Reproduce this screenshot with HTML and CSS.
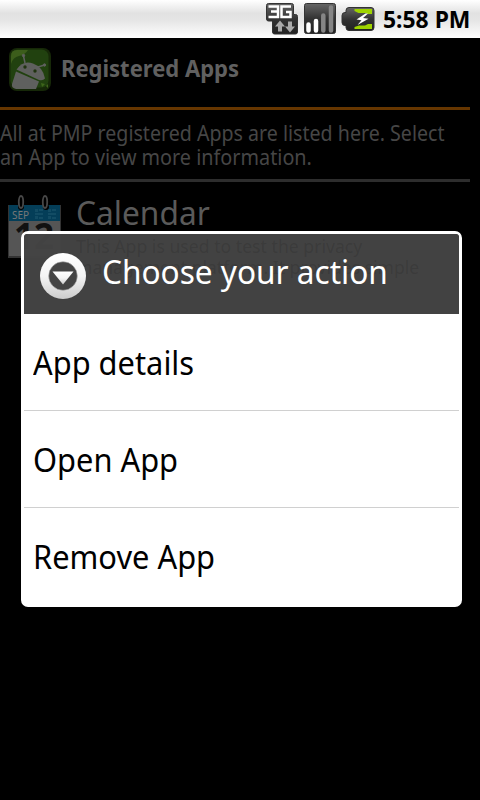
FILE: index.html
```html
<!DOCTYPE html>
<html lang="en">
<head>
<meta charset="utf-8">
<title>Registered Apps</title>
<link rel="stylesheet" href="styles.css">
</head>
<body>
<header class="status">
  <svg class="status-icons" width="112" height="38" viewBox="0 0 112 38">
    <defs>
      <linearGradient id="dark" x2="0" y2="1"><stop stop-color="#666"/><stop offset=".5" stop-color="#333"/><stop offset="1" stop-color="#222"/></linearGradient>
    </defs>
    <path d="M2.500 3.500h23q2 0 2 2v9h2q2 0 2 2v15.500q0 2-2 2H8.500q-2 0-2-2V21H2.500q-2 0-2-2V5.500q0-2 2-2Z" fill="url(#dark)" stroke="#333"/>
    <path d="M2.500 6.500H12V17H2.500M5 11.500h7M25 6.500H15.500V17H24.500V12H20" fill="none" stroke="#fff" stroke-width="2.500"/>
    <path d="M14 20.500l5 6h-3v5h-4v-5H9ZM24 32.500l-5-6h3v-5h4v5h3Z" fill="#aaa"/>
    <rect x="38.500" y="3.500" width="31" height="30" rx="2" fill="url(#dark)" stroke="#333"/>
    <g stroke-width="4.500" stroke-linecap="round">
      <path d="M42.500 24.500v6M50 21v9.500" stroke="#fff"/>
      <path d="M57.300 15.500v15M65 7.500v23" stroke="#858585"/>
    </g>
    <path d="M83 7.500h22q3 0 3 3v17q0 3-3 3H83q-3 0-3-3v-2h-1q-3 0-3-3v-7q0-3 3-3h1v-2q0-3 3-3Z" fill="url(#dark)" stroke="#333"/>
    <path d="M88.500 9H106v5h-4.500l-2-1h-7l-4-2ZM88.500 29H106v-5h-4l-3 1.500h-6l-4.500 1.500Z" fill="#9fd400"/>
    <path d="M99.500 13.500l-9 6 5 .8-4 4.700 11-6.200-5.500-.8 5-4.500Z" fill="#fff"/>
  </svg>
  <span class="text clock">5:58 PM</span>
</header>
<main class="screen">
  <div class="title">
    <svg class="logo" width="44" height="44" viewBox="0 0 44 44">
      <rect x="1" y="1" width="42" height="43" rx="8" fill="#162808"/>
      <rect x="2.500" y="2.500" width="38" height="38" rx="7" fill="#21410f"/>
      <path d="M3 17V9q0-6 6-6h11Q17 8 11 9T3 17Z" fill="#3c5d1b"/>
      <g fill="#5f605e" stroke="#5f605e">
        <path d="M8.500 22.500Q15 13 25 16.500T37 31.500Q35 34 31 33Z" stroke="none"/>
        <path d="M8 24.500L31 34.500 28 42H8q-5-1-4-5Z" stroke="none"/>
        <path d="M17 16l-1.500-7M30 20l6.500-2" stroke-width="1.500"/>
        <circle cx="15.500" cy="8.500" r="1.200"/><circle cx="36.500" cy="18" r="1.200"/>
      </g>
      <circle cx="17" cy="20" r="1.700" fill="#20330f"/><circle cx="27" cy="24" r="1.700" fill="#20330f"/>
      <path d="M33 36l4 1-3 3ZM38 39l2-2v4Z" fill="#3e661b"/>
    </svg>
    <h1 class="text heading">Registered Apps</h1>
  </div>
  <div class="intro">
    <span class="text line1">All at PMP registered Apps are listed here. Select</span>
    <span class="text line2">an App to view more information.</span>
  </div>
  <div class="item">
    <svg class="calendar" width="54" height="66" viewBox="0 0 54 66">
      <rect x="0" y="10" width="53" height="53" fill="#333"/>
      <rect x="1" y="26" width="51" height="35" fill="#555"/>
      <rect x="1" y="10" width="51" height="16" fill="#043e58"/>
      <path d="M27 14h3v3h-3zM31 14h4v2h-4zM27 18h8v2h-8zM27 21h3v3h-3zM31 22h4v2h-4zM40 14h3v3h-3zM44 14h4v2h-4zM40 18h8v2h-8zM40 21h3v3h-3zM44 22h4v2h-4z" fill="#124c64"/>
      <text x="4" y="24" font-size="10" textLength="17" class="cal-month">SEP</text>
      <text x="6" y="54" font-size="35" textLength="40" class="cal-day">12</text>
      <g fill="#000"><circle cx="13" cy="12" r="3"/><circle cx="38" cy="12" r="3"/></g>
      <g fill="none" stroke="#484848" stroke-width="1.800"><ellipse cx="13" cy="7" rx="2.200" ry="6"/><ellipse cx="37" cy="7" rx="2.200" ry="6"/></g>
    </svg>
    <div class="item-body">
      <span class="text name">Calendar</span>
      <span class="text sub sub1">This App is used to test the privacy</span>
      <span class="text sub sub2">management platform. It provides simple</span>
    </div>
  </div>
</main>
<section class="dialog">
  <div class="dialog-head">
    <svg class="ring" width="48" height="48" viewBox="0 0 48 48">
      <defs><linearGradient id="ring" x2="0" y2="1"><stop stop-color="#fff"/><stop offset=".5" stop-color="#f4f4f4"/><stop offset="1" stop-color="#ccc"/></linearGradient></defs>
      <circle cx="24" cy="24" r="23" fill="url(#ring)"/>
      <circle cx="24" cy="24" r="14.300" fill="#444" stroke="#aaa" stroke-width=".6"/>
      <path d="M13.500 19.500h21L24 32.500Z" fill="url(#ring)"/>
    </svg>
    <h2 class="text choose">Choose your action</h2>
  </div>
  <ul class="menu">
    <li><span class="text option">App details</span></li>
    <li><span class="text option">Open App</span></li>
    <li><span class="text option">Remove App</span></li>
  </ul>
</section>
</body>
</html>
```
FILE: styles.css
```css
* { box-sizing: border-box; }
body {
  margin: 0;
  width: 480px;
  height: 800px;
  overflow: hidden;
  position: relative;
  background: #000;
  font-family: "Noto Sans", "Open Sans", sans-serif;
}
h1, h2, ul { margin: 0; padding: 0; font-weight: 400; list-style: none; }
svg { display: block; flex: none; }
.text {
  display: block;
  width: max-content;
  white-space: nowrap;
  transform-origin: 0 50%;
}
.status {
  height: 38px;
  display: flex;
  padding-left: 266px;
  background: linear-gradient(#fff 0, #e2e2e2 35%, #e6e6e6 55%, #fff 100%);
}
.clock {
  margin-left: 5px;
  font-size: 23px;
  font-weight: 700;
  line-height: 38px;
  transform: scaleX(.995);
}
.screen { color: #464646; }
.title {
  height: 69px;
  display: flex;
  padding: 9px 0 0 8px;
}
.heading {
  margin-left: 9px;
  font-size: 24px;
  font-weight: 700;
  line-height: 42px;
  color: #606060;
  transform: scaleX(.917);
}
.intro {
  width: 470px;
  height: 75px;
  padding-top: 11px;
  border-top: 3px solid #663600;
  border-bottom: 3px solid #2d2d2d;
  font-size: 21px;
  line-height: 24px;
}
.line1 { transform: scaleX(.934); }
.line2 { transform: scaleX(.943); }
.item { display: flex; padding: 13px 0 0 8px; }
.item-body { margin-left: 14px; }
.cal-month { fill: #777; }
.cal-day { font-weight: 700; fill: #111; }
.name {
  font-size: 33px;
  line-height: 35px;
  color: #5a5a5a;
  transform: scaleX(.96);
}
.sub {
  position: relative;
  z-index: 1;
  margin-top: 6px;
  font-size: 18px;
  line-height: 21px;
  color: rgba(0, 0, 0, .11);
}
.sub1 { transform: scaleX(.98); }
.sub2 { margin-top: 0; transform: scaleX(.975); }
.dialog {
  position: absolute;
  left: 21px;
  top: 231px;
  width: 441px;
  height: 376px;
  border: 3px solid #fff;
  border-radius: 7px;
}
.dialog-head {
  height: 80px;
  display: flex;
  padding: 18px 0 0 15px;
  border-radius: 3px 3px 0 0;
  background: rgba(68, 68, 68, .97);
  color: #fff;
}
.ring, .choose { position: relative; z-index: 2; }
.choose { margin-left: 15px; font-size: 33px; line-height: 40px; transform: scaleX(.957); }
.menu { background: #fff; color: #000; font-size: 33px; }
.menu li { height: 97px; border-bottom: 1px solid #d0d0d0; padding-left: 9px; line-height: 98px; }
.menu li:last-child { height: 96px; border: 0; }
.option { transform: scaleX(.934); }
```
